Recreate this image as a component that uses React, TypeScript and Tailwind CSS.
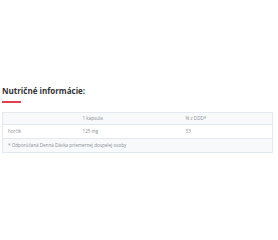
const rows = [
  { name: 'horčík', amount: '125 mg', rdi: '33' },
];

export default function App() {
  return (
    <div className="min-h-[240px] w-[278px] bg-white px-[2px] pt-[86px] font-['Open_Sans',sans-serif]">
      <h2 className="text-[8px] font-bold leading-[10px] text-[#333]">Nutričné informácie:</h2>
      <div className="mt-[5px] h-[1.5px] w-[19px] bg-[#e0424f]" />

      <table className="mt-[9px] w-[271px] border-collapse border border-[#e4e9ef] text-left text-[4.6px] leading-none text-[#8a8f95]">
        <thead>
          <tr className="h-[12px] bg-[#f7f9fb]">
            <th className="w-[76px] px-[5px] font-normal" />
            <th className="w-[103px] px-[4px] font-normal">1 kapsula</th>
            <th className="px-[4px] font-normal">% z DDD*</th>
          </tr>
        </thead>
        <tbody>
          {rows.map((row) => (
            <tr key={row.name} className="h-[14px] border-t border-[#e4e9ef]">
              <td className="px-[5px]">{row.name}</td>
              <td className="px-[4px]">{row.amount}</td>
              <td className="px-[4px]">{row.rdi}</td>
            </tr>
          ))}
          <tr className="h-[14px] border-t border-[#e4e9ef] bg-[#f7f9fb]">
            <td colSpan={3} className="px-[5px]">* Odporúčaná Denná Dávka priemernej dospelej osoby</td>
          </tr>
        </tbody>
      </table>
    </div>
  );
}
